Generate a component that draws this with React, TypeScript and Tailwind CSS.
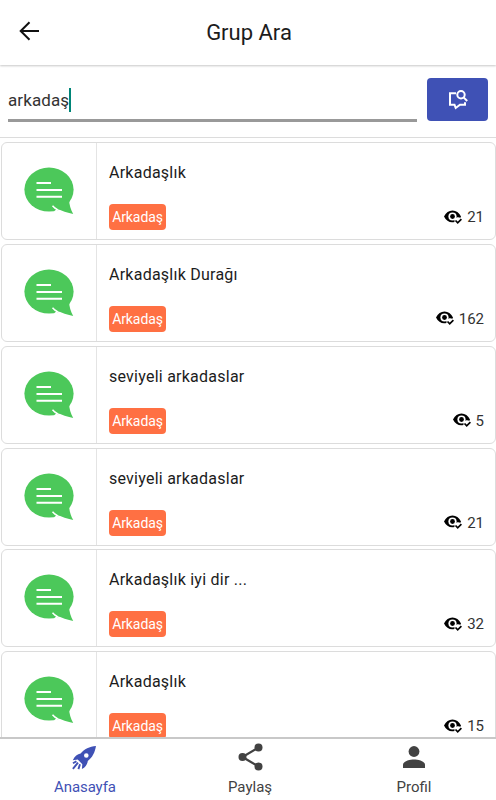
const groups = [
  { name: "Arkadaşlık", views: 21 },
  { name: "Arkadaşlık Durağı", views: 162 },
  { name: "seviyeli arkadaslar", views: 5 },
  { name: "seviyeli arkadaslar", views: 21 },
  { name: "Arkadaşlık iyi dir ...", views: 32 },
  { name: "Arkadaşlık", views: 15 },
];

const BackIcon = () => (
  <svg width="22" height="20" viewBox="0 0 22 20" fill="none" stroke="#111" strokeWidth="2">
    <path d="M21 10H2.500M11.500 1.300L2.700 10l8.800 8.700" />
  </svg>
);

const SearchChatIcon = () => (
  <svg width="20" height="20" viewBox="0 0 20 20" fill="none" stroke="#fff" strokeWidth="2">
    <path d="M8 3.200H2v11.500h4.500l1.200 3.300 4.300-3.300h5v-2.500" />
    <circle cx="13" cy="4.800" r="3.700" />
    <path d="M15.600 7.400l3.600 3.600" />
  </svg>
);

const BubbleIcon = () => (
  <svg width="50" height="48" viewBox="0 0 50 48">
    <ellipse cx="25" cy="22.600" rx="24.600" ry="22" fill="#4cc85a" />
    <path d="M45 32c.3 6 1.600 10.500 4.200 15C41 45.300 34.500 43 29 38.500z" fill="#4cc85a" />
    <path d="M28.500 38.800c1.400 1.700 3 2.900 5 3.900l-2.600 2" fill="none" stroke="#fff" strokeWidth="1.500" />
    <path d="M12.500 16h14.500M12.500 23H38M12.500 29.800H38" stroke="#fff" strokeWidth="1.900" />
  </svg>
);

const EyeIcon = () => (
  <svg width="18" height="15" viewBox="0 0 18 15">
    <path
      d="M0 6.500C1.800 2.600 5 .500 8.500.500s6.700 2.100 8.500 6c-.2.500-.4.900-.7 1.300-1-.6-2.300-.8-3.500-.4-1.700.5-2.700 2.200-2.300 4.500-3.900 1.300-8.300-.6-10.500-5.400z"
      fill="#000"
    />
    <circle cx="8.500" cy="6.500" r="4.100" fill="#fff" />
    <circle cx="8.500" cy="6.500" r="2.400" fill="#000" />
    <path d="M11.500 10.500l2.200 2.300 3.700-3.700" fill="none" stroke="#000" strokeWidth="1.700" />
  </svg>
);

const RocketIcon = () => (
  <svg width="24" height="24" viewBox="0 0 24 24" fill="#3f51b5">
    <path
      fillRule="evenodd"
      d="M24 0C17.500.600 12.300 3 8.600 7.600 5.500 8 2.600 10.500.8 14.200l4.900-.7 4.600 4.700-.4 4.900c3.700-2 5.500-4.800 5.900-8.200C20.400 11.500 22.900 6.500 24 0zM14.300 7.200a2.300 2.300 0 1 1 0 4.600 2.300 2.300 0 0 1 0-4.600z"
    />
    <path d="M4.400 15.300L1 17.300M6 16.600L.9 22.900M8 18.300l-1.600 4.800" stroke="#3f51b5" strokeWidth="1.900" />
  </svg>
);

const ShareIcon = () => (
  <svg width="25" height="28" viewBox="0 0 25 28" fill="#424242">
    <path d="M20.500 4.500L4.500 14l16 9.500" fill="none" stroke="#424242" strokeWidth="2.300" />
    <circle cx="20.500" cy="4.500" r="4" />
    <circle cx="4.500" cy="14" r="4" />
    <circle cx="20.500" cy="23.500" r="4" />
  </svg>
);

const PersonIcon = () => (
  <svg width="22" height="22" viewBox="0 0 22 22" fill="#424242">
    <circle cx="11" cy="5.500" r="5.400" />
    <path d="M0 22v-3.200c0-3.700 7-5.300 11-5.300s11 1.600 11 5.300V22z" />
  </svg>
);

const GroupCard = ({ name, views }: { name: string; views: number }) => {
  return (
    <div className="flex h-[98px] shrink-0 rounded-md border border-[#dcdcdc] bg-white">
      <div className="flex w-[95px] shrink-0 items-center justify-center border-r border-[#e4e4e4]">
        <BubbleIcon />
      </div>
      <div className="flex flex-1 flex-col justify-between pb-[9px] pl-3 pr-[11px] pt-[18px]">
        <h2 className="text-[16px] leading-6 tracking-[0.24px] text-[#1c1c1c]">{name}</h2>
        <div className="flex items-center justify-between">
          <span className="flex h-[26px] w-[57px] items-center justify-center rounded-[4px] bg-[#ff7043] pt-px text-[14px] tracking-[-0.1px] text-white">
            Arkadaş
          </span>
          <span className="flex items-center gap-[5px] text-[15px] leading-5 text-[#333]">
            <EyeIcon />
            {views}
          </span>
        </div>
      </div>
    </div>
  );
};

const App = () => {
  return (
    <main className="flex h-[800px] w-[496px] flex-col overflow-hidden bg-white font-['Roboto',sans-serif]">
      <header className="z-10 grid h-[65px] shrink-0 grid-cols-[1fr_auto_1fr] items-center bg-white shadow-[0_1px_2px_rgba(0,0,0,0.22)]">
        <button className="-mt-1 ml-[18px] w-fit">
          <BackIcon />
        </button>
        <h1 className="pl-[2px] text-[22px] text-[#1c1c1c]">Grup Ara</h1>
      </header>
      <div className="flex h-[73px] shrink-0 items-start justify-between border-b border-[#dcdcdc] px-2 pt-[13px]">
        <div className="flex h-[44px] w-[409px] items-center border-b-[3px] border-[#999] pt-[5px] text-[17px] tracking-[0.1px] text-[#333]">
          <span>arkadaş</span>
          <span className="-mt-[2px] h-6 w-[2px] bg-[#008577]" />
        </div>
        <button className="flex h-[43px] w-[61px] items-center justify-center rounded-[4px] bg-[#3f51b5]">
          <SearchChatIcon />
        </button>
      </div>
      <div className="flex min-h-0 flex-1 flex-col gap-[3.850px] overflow-hidden pl-px pt-1">
        {groups.map((group, i) => (
          <GroupCard key={i} name={group.name} views={group.views} />
        ))}
      </div>
      <nav className="flex h-[63px] shrink-0 border-t-2 border-[#c8c8c8] bg-white text-[15px] leading-5 text-[#424242]">
        <a className="flex flex-1 flex-col items-center pl-[3px] text-[#3f51b5]">
          <span className="-ml-[3px] flex h-[38px] items-center">
            <RocketIcon />
          </span>
          <span className="tracking-[-0.1px]">Anasayfa</span>
        </a>
        <a className="flex flex-1 flex-col items-center pl-px">
          <span className="flex h-[38px] items-center pb-[3px]">
            <ShareIcon />
          </span>
          Paylaş
        </a>
        <a className="flex flex-1 flex-col items-center">
          <span className="flex h-[38px] items-center pb-[3px]">
            <PersonIcon />
          </span>
          Profil
        </a>
      </nav>
    </main>
  );
};

export default App;
